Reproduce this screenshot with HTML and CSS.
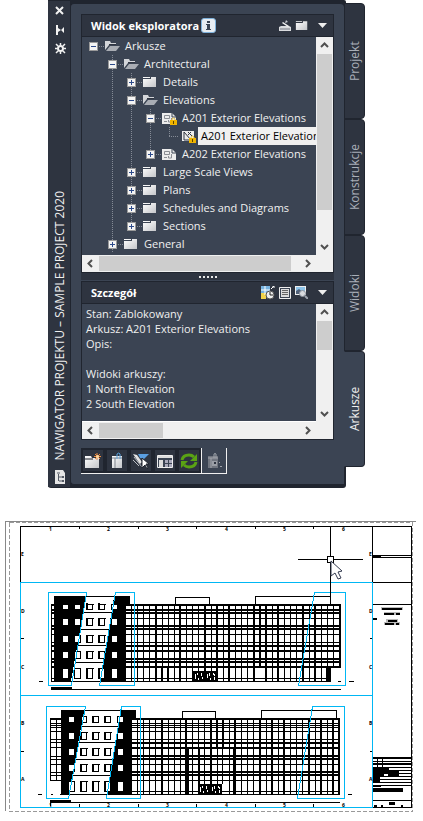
FILE: index.html
```html
<!DOCTYPE html>
<html lang="pl">
<head>
    <meta charset="UTF-8">
    <meta name="viewport" content="width=device-width, initial-scale=1.0">
    <title>Nawigator projektu</title>
    <link rel="stylesheet" href="styles.css">
</head>
<body>
    <!-- Shared icons -->
    <svg class="defs" aria-hidden="true">
        <defs>
            <linearGradient id="paper" x1="0" y1="0" x2="1" y2="1">
                <stop offset="0" stop-color="#fff"/>
                <stop offset="1" stop-color="#c4c6ca"/>
            </linearGradient>
            <symbol id="folder" viewBox="0 0 16 14">
                <path d="M1 2h7v1H1zM1 4h8V2h5v10H1z" fill="url(#paper)"/>
            </symbol>
            <symbol id="folder-open" viewBox="0 0 16 14">
                <path d="M1 11V2h5l1 2h5v2H5z" fill="#d4d6da"/>
                <path d="M2 12l4-5h10l-4 5z" fill="#a9adb4"/>
                <path d="M5 5h7v1H5z" fill="#2e3440"/>
            </symbol>
            <symbol id="sheet" viewBox="0 0 16 14">
                <path d="M1 2h10l4 4v7H1z" fill="#ececec"/>
                <path d="M11 2v4h4" fill="none" stroke="#3b4453"/>
                <path d="M3.500 4.500h5v3h-5zM10.500 7v4h-3v-2M3 10.500h3" fill="none" stroke="#8a8d93"/>
            </symbol>
            <symbol id="view" viewBox="0 0 16 14">
                <path d="M2 2h12v10H2z" fill="#ececec"/>
                <path d="M4 3l7 8H4zM8 3l4 4M11 3L8 6" fill="none" stroke="#2e3440"/>
            </symbol>
            <symbol id="lock" viewBox="0 0 7 8">
                <path d="M2 4V2q1.500-2 3 0v2" fill="none" stroke="#f3c63b"/>
                <path d="M0 3h7v5H0z" fill="#f0b400"/>
                <path d="M3 4h1v3H3z" fill="#5b4300"/>
            </symbol>
            <symbol id="chevron" viewBox="0 0 9 9">
                <path d="M1 6l3.500-3.500L8 6" fill="none" stroke="#505050" stroke-width="2"/>
            </symbol>
        </defs>
    </svg>

    <section class="navigator">
        <div class="window">
            <div class="rail">
                <button class="rail-btn" aria-label="Zamknij"><svg width="10" height="10" viewBox="0 0 10 10"><path d="M1 1l7 7M8 1l-7 7" stroke="#f2f2f2" stroke-width="2"/></svg></button>
                <button class="rail-btn" aria-label="Autoukrywanie"><svg width="10" height="10" viewBox="0 0 10 10"><path d="M1 0h2v10H1zM3 3l3 2-3 2zM9 2v6L6 5z" fill="#f2f2f2"/></svg></button>
                <button class="rail-btn" aria-label="Właściwości"><svg width="11" height="11" viewBox="0 0 11 11"><circle cx="5.500" cy="5.500" r="2.500" fill="none" stroke="#f2f2f2" stroke-width="2"/><path d="M5.500 0v2M5.500 9v2M0 5.500h2M9 5.500h2M1 1l2 2M8 8l2 2M10 1L8 3M3 8l-2 2" stroke="#f2f2f2" stroke-width="1.500"/></svg></button>
                <h1 class="rail-title">NAWIGATOR PROJEKTU – SAMPLE PROJECT 2020</h1>
                <svg class="rail-logo" width="12" height="14" viewBox="0 0 12 14"><path d="M1 0h8l2 3v11H1z" fill="#e6e6e6"/><path d="M3 3h3M4.500 4v7M5 7h3M5 11h4" stroke="#555b66" fill="none"/><path d="M8 6h2v2H8zM8 10h2v2H8z" fill="#555b66"/></svg>
            </div>

            <div class="body">
                <section class="pane">
                    <header class="pane-head">
                        <h2>Widok eksploratora</h2>
                        <span class="info"><svg width="13" height="13" viewBox="0 0 13 13"><path d="M5 2h3v2H5zM4 5h4v5h1v1H4v-1h1V6H4z" fill="#3b4453"/></svg></span>
                        <div class="tools">
                            <button aria-label="Skaner"><svg width="14" height="12" viewBox="0 0 14 12"><path d="M1 7l2-1h8l2 1v4H1z" fill="#d9dbde"/><path d="M5 2l6 4-1 1-6-4z" fill="#f4f4f4"/><path d="M2 9h10" stroke="#727781"/><path d="M8 0l2 2-3 1z" fill="#c5c8cd"/></svg></button>
                            <button aria-label="Folder"><svg width="14" height="13" viewBox="0 0 16 14"><use href="#folder"/></svg></button>
                            <button class="drop" aria-label="Menu"><svg width="9" height="5" viewBox="0 0 9 5"><path d="M0 0h9L4.500 5z" fill="#eee"/></svg></button>
                        </div>
                    </header>
                    <div class="scroll-area">
                        <ul class="tree">
                            <li>
                                <div class="row"><button class="toggle" aria-label="Zwiń"></button><svg class="icon"><use href="#folder-open"/></svg><span>Arkusze</span></div>
                                <ul class="open-end">
                                    <li>
                                        <div class="row"><button class="toggle" aria-label="Zwiń"></button><svg class="icon"><use href="#folder-open"/></svg><span>Architectural</span></div>
                                        <ul>
                                            <li><div class="row"><button class="toggle plus" aria-label="Rozwiń"></button><svg class="icon"><use href="#folder"/></svg><span>Details</span></div></li>
                                            <li>
                                                <div class="row"><button class="toggle" aria-label="Zwiń"></button><svg class="icon"><use href="#folder-open"/></svg><span>Elevations</span></div>
                                                <ul>
                                                    <li>
                                                        <div class="row"><button class="toggle" aria-label="Zwiń"></button><svg class="icon"><use href="#sheet"/><use href="#lock" x="9" y="6" width="7" height="8"/></svg><span>A201 Exterior Elevations</span></div>
                                                        <ul>
                                                            <li><div class="row leaf"><svg class="icon"><use href="#view"/><use href="#lock" x="9" y="6" width="7" height="8"/></svg><span class="selected">A201 Exterior Elevations</span></div></li>
                                                        </ul>
                                                    </li>
                                                    <li><div class="row"><button class="toggle plus" aria-label="Rozwiń"></button><svg class="icon"><use href="#sheet"/></svg><span>A202 Exterior Elevations</span></div></li>
                                                </ul>
                                            </li>
                                            <li><div class="row"><button class="toggle plus" aria-label="Rozwiń"></button><svg class="icon"><use href="#folder"/></svg><span>Large Scale Views</span></div></li>
                                            <li><div class="row"><button class="toggle plus" aria-label="Rozwiń"></button><svg class="icon"><use href="#folder"/></svg><span>Plans</span></div></li>
                                            <li><div class="row"><button class="toggle plus" aria-label="Rozwiń"></button><svg class="icon"><use href="#folder"/></svg><span>Schedules and Diagrams</span></div></li>
                                            <li><div class="row"><button class="toggle plus" aria-label="Rozwiń"></button><svg class="icon"><use href="#folder"/></svg><span>Sections</span></div></li>
                                        </ul>
                                    </li>
                                    <li><div class="row"><button class="toggle plus" aria-label="Rozwiń"></button><svg class="icon"><use href="#folder"/></svg><span>General</span></div></li>
                                </ul>
                            </li>
                        </ul>
                        <div class="vbar">
                            <button aria-label="W górę"><svg width="9" height="9"><use href="#chevron"/></svg></button>
                            <div class="track"><div class="thumb thumb-tree-y"></div></div>
                            <button class="down" aria-label="W dół"><svg width="9" height="9"><use href="#chevron"/></svg></button>
                        </div>
                    </div>
                    <div class="hbar">
                        <button class="left" aria-label="W lewo"><svg width="9" height="9"><use href="#chevron"/></svg></button>
                        <div class="track"><div class="thumb thumb-tree-x"></div></div>
                        <button class="right" aria-label="W prawo"><svg width="9" height="9"><use href="#chevron"/></svg></button>
                    </div>
                </section>

                <div class="splitter"><i></i><i></i><i></i><i></i><i></i></div>

                <section class="pane">
                    <header class="pane-head">
                        <h2>Szczegół</h2>
                        <div class="tools">
                            <button aria-label="Odśwież podgląd"><svg width="14" height="14" viewBox="0 0 14 14"><path d="M0 0h9v7H0z" fill="#77b3e0"/><path d="M0 7h5v6H0z" fill="#f2d24a"/><path d="M4 0v9M0 4h9" stroke="#fff"/><path d="M10 3l3-3M11 0h2v2" stroke="#fff" fill="none"/><circle cx="9" cy="9" r="4" fill="#eee" stroke="#555"/><path d="M9 6v3h3" fill="none" stroke="#222"/></svg></button>
                            <button aria-label="Szczegóły"><svg width="12" height="12" viewBox="0 0 12 12"><path d="M.500.500h11v11H.500z" fill="#3b4453" stroke="#eee"/><path d="M2 2h8v8H2z" fill="#ddd"/><path d="M3 3.500h6M3 5.500h6M3 7.500h6" stroke="#666"/></svg></button>
                            <button aria-label="Podgląd"><svg width="13" height="13" viewBox="0 0 13 13"><path d="M0 0h11v9H0z" fill="#eee"/><path d="M1 1h9v4H1z" fill="#8ec4ea"/><path d="M1 8V5l3-2 6 5z" fill="#506078"/><circle cx="7.500" cy="7.500" r="3" fill="#d8dade" stroke="#8d939d"/><path d="M10 10l3 3" stroke="#9aa0aa" stroke-width="2"/></svg></button>
                            <button class="drop" aria-label="Menu"><svg width="9" height="5" viewBox="0 0 9 5"><path d="M0 0h9L4.500 5z" fill="#eee"/></svg></button>
                        </div>
                    </header>
                    <div class="scroll-area">
                        <div class="details">
                            <p>Stan: Zablokowany<br>Arkusz: A201 Exterior Elevations<br>Opis:</p>
                            <p>Widoki arkuszy:<br>1 North Elevation<br>2 South Elevation</p>
                        </div>
                        <div class="vbar">
                            <button aria-label="W górę"><svg width="9" height="9"><use href="#chevron"/></svg></button>
                            <div class="track"><div class="thumb thumb-det-y"></div></div>
                            <button class="down" aria-label="W dół"><svg width="9" height="9"><use href="#chevron"/></svg></button>
                        </div>
                    </div>
                    <div class="hbar">
                        <button class="left" aria-label="W lewo"><svg width="9" height="9"><use href="#chevron"/></svg></button>
                        <div class="track"><div class="thumb thumb-det-x"></div></div>
                        <button class="right" aria-label="W prawo"><svg width="9" height="9"><use href="#chevron"/></svg></button>
                    </div>
                </section>

                <div class="toolbar">
                    <button aria-label="Nowy podzbiór"><svg width="18" height="18" viewBox="0 0 18 18"><path d="M1 4h6l1 2h7v10H1z" fill="url(#paper)"/><path d="M1 7h8" stroke="#20252f"/><path d="M13 1v7M10 4.500h7M11 2l5 5M16 2l-5 5" stroke="#f08a3c"/><circle cx="13.500" cy="4.500" r="1.500" fill="#ffd9a0"/></svg></button>
                    <button aria-label="Nowy arkusz"><svg width="18" height="18" viewBox="0 0 18 18"><path d="M4 4h10v12H4z" fill="url(#paper)"/><path d="M4 6h10M7 6v10" stroke="#7d828b"/><path d="M9 7V2q2-2 3 0v5" fill="none" stroke="#5aa2dd"/></svg></button>
                    <button aria-label="Etykieta"><svg width="18" height="18" viewBox="0 0 18 18"><path d="M1 2l4 1 5 7-2 2z" fill="#e4e4e4"/><path d="M2 5l8 10M1 8l6 6" stroke="#b9bcc2"/><path d="M6 2h11l-5 5-4-1z" fill="#5a9ee0"/><path d="M10 6v10l3-3 2 4 1-1-2-4h3z" fill="#fff" stroke="#20252f"/></svg></button>
                    <button aria-label="Tabela arkuszy"><svg width="18" height="18" viewBox="0 0 18 18"><path d="M1.500 3.500h15v12h-15z" fill="#3b4453" stroke="#eee"/><path d="M2 4h14v2H2zM3 8h4v7H3z" fill="#ddd"/><path d="M9 8h3v3H9zM13 8h3v3h-3zM9 12h3v3H9zM13 12h3v3h-3z" fill="#aab"/></svg></button>
                    <button aria-label="Odśwież"><svg width="18" height="18" viewBox="0 0 18 18"><path d="M2 8q1-5 7-5 3 0 5 2M16 10q-1 5-7 5-3 0-5-2" fill="none" stroke="#5aa314" stroke-width="3"/><path d="M17 2v7h-7zM1 16V9h7z" fill="#5aa314"/></svg></button>
                    <button class="framed" aria-label="Eksport" disabled><svg width="18" height="18" viewBox="0 0 18 18"><path d="M3 4h10v12H3z" fill="#70757f"/><path d="M3 6h10M6 6v10M9 6V2q1-1 2 0v4" fill="none" stroke="#a0a4ab"/><path d="M7 9h5v5H7z" fill="#9a9ea6"/><path d="M9 10h2v2H9z" fill="#2e3440"/><path d="M14 10h1v1h-1zM15 14h2v1h-2z" fill="#a0a4ab"/></svg></button>
                </div>
            </div>
        </div>

        <nav class="tabs">
            <button class="tab">Projekt</button>
            <button class="tab">Konstrukcje</button>
            <button class="tab">Widoki</button>
            <button class="tab active">Arkusze</button>
        </nav>
    </section>

    <!-- Sheet A201: north and south elevation -->
    <svg class="drawing" viewBox="0 516 423 305" role="img" aria-label="Exterior Elevations">
        <g fill="none" shape-rendering="crispEdges">
            <path d="M416 521.500H5.500V811" stroke="#888"/>
            <path d="M9.500 522.500H412.500V811.500H9.500z" stroke="#999" stroke-dasharray="4 2"/>

            <!-- sheet border and title block -->
            <g stroke="#000">
                <path d="M20.500 582V526.500H411.500V807.500H372M372.500 526V582M372 582.500h39M372 604.500h39M372 555.500h39M372 557.500h39"/>
                <path d="M79.500 526v3M138.500 526v3M196.500 526v3M255.500 526v3M313.500 526v3M21 638.500h3M21 751.500h3M370 638.500h2M370 751.500h2"/>
                <path d="M79.500 804v3M138.500 804v3M196.500 804v3M255.500 804v3M313.500 804v3"/>
                <path d="M373 556.500h8M373 619h4" stroke-width="2"/>
                <path d="M373 758h38M373 764h38" stroke-width="2"/>
                <path d="M373 761.500h38M373 767h38M373 770h38M373 773.500h38M373 776.500h38M373 779.500h38M373 782.500h38M373 785.500h38M373 800.500h38M377.500 757v10M382.500 757v10"/>
                <path d="M373 768h16M373 772h26" stroke-width="3"/>
                <path d="M373 775h11M388 774h11" stroke-width="3"/>
            </g>
            <g fill="#000">
                <path d="M373 767h7v15h-7zM373 788h30v4h-30zM389 802h6v3h-6zM373 785h8v2h-8zM374 805h3v2h-3zM381 805h2v2h-2zM401 805h2v2h-2z"/>
            </g>
            <path d="M381 608.500h22M384 613.500h16M386 620.500h12M384 623.500h16" stroke="#bbb" stroke-width="3"/>
            <path d="M382 608.500h20M384 613.500h10M396 613.500h4M388 620.500h9M385 623.500h9M396 623.500h3" stroke="#000" stroke-width="2"/>

            <!-- north: facade grid -->
            <g stroke="#000">
                <path d="M51.500 604v77M131.500 604v77M137.500 604v77M143.500 604v77M149.500 604v77M162.500 604v77M168.500 604v77M174.500 604v77M186.500 604v77M192.500 604v77M198.500 604v67M211.500 604v67M223.500 604v77M235.500 604v77M241.500 604v77M247.500 604v77M272.500 604v77M284.500 604v77M290.500 604v77M296.500 604v77M309.500 604v77M321.500 604v77M327.500 604v77M333.500 604v63"/>
                <path d="M156 604v77M180 604v77M205 604v77M217 604v77M229 604v77M254 604v77M260 604v63M266 604v77M278 604v77M303 604v77M315 604v77M340 604v63M162 667v14M168 667v14" stroke-width="2"/>
                <path d="M51 605h290M51 610h290M51 613h290M51 626h290M51 629h290M51 646h290M51 651h290M51 659h290M51 662h290M51 667h290" stroke-width="2"/>
                <path d="M51 618.500h290M51 634.500h290M51 642.500h290M51 678.500h280M51 681.500h280M51 689.500h290M175.500 604v-6.500h34v6.500M255.500 604v-7.500h75v7.500M39 681.500h4M338 681.500h3M349 681.500h5"/>
                <path d="M51 688h21" stroke-width="3"/>
            </g>
            <path d="M326 667h5v14h-5zM54 596h76v8h-4v78H54z" fill="#000"/>
            <path d="M86 597h28l-14 84H71z" fill="#fff"/>
            <path d="M84 596.500h30M83 612.500h29M81 629.500h28M78 645.500h28M75 662.500h29M71 681.500h29" stroke="#000"/>
            <g fill="#fff" stroke="#000">
                <path d="M62.500 604.500h6v5h-6zM74.500 604.500h6v5h-6zM87.500 604.500h5v5h-5zM99.500 604.500h5v5h-5zM111.500 604.500h6v5h-6z"/>
                <path d="M62.500 618.500h6v7h-6zM74.500 618.500h6v7h-6zM87.500 618.500h5v7h-5zM99.500 618.500h5v7h-5zM111.500 618.500h6v7h-6z"/>
                <path d="M62.500 635.500h6v7h-6zM74.500 635.500h6v7h-6zM87.500 635.500h5v7h-5zM99.500 635.500h5v7h-5zM111.500 635.500h6v7h-6z"/>
                <path d="M62.500 651.500h6v7h-6zM74.500 651.500h6v7h-6zM87.500 651.500h5v7h-5zM99.500 651.500h5v7h-5zM111.500 651.500h6v7h-6z"/>
                <path d="M62.500 668.500h6v10h-6zM74.500 668.500h6v10h-6zM87.500 668.500h5v10h-5zM99.500 668.500h5v10h-5zM111.500 668.500h6v10h-6z"/>
            </g>
            <path d="M86 604h8M98 604h8M86 618h8M98 618h8M86 635h8M98 635h8M75 651h6M86 651h8M98 651h8M74 668h7M86 668h8M98 668h8" stroke="#000"/>
            <path d="M87 603v7M99 603v7M87 618v8M99 618v8M87 635v8M99 635v8M87 651v8M99 651v8M87 668v11M99 668v11" stroke="#000" stroke-width="2"/>
            <path d="M193 671h24v10h-24z" fill="#000"/>
            <path d="M195 674v5M198 673l-1 2M198 678v2M201 673v3M202 677v2M207 674v4M210 673l-1 3M210 678v2M213 673l2 3M214 677v3" stroke="#fff"/>

            <!-- south: facade grid -->
            <g stroke="#000">
                <path d="M50.500 718v62M56.500 718v62M137.500 718v76M143.500 718v76M149.500 718v76M155.500 718v76M168.500 718v76M174.500 718v76M180.500 718v76M192.500 718v76M204.500 718v66M229.500 718v76M241.500 718v76M247.500 718v76M253.500 718v76M266.500 718v76M278.500 718v76M290.500 718v76M296.500 718v76M302.500 718v76M315.500 718v76M327.500 718v76M217.500 748v36M222.500 748v36"/>
                <path d="M162 718v76M186 718v76M199 748v36M211 718v66M217 718v30M223 718v30M235 718v76M260 718v76M272 718v76M284 718v76M309 718v76M321 718v76M333 718v76M339 718v76" stroke-width="2"/>
                <path d="M198.500 718v30"/>
                <path d="M187.500 748v46M234.500 748v46" stroke-width="3"/>
                <path d="M50 719h290M132 743h208M132 748h208M132 756h208M132 759h208M132 772h208M132 775h208" stroke-width="2"/>
                <path d="M50 723.500h290M50 725.500h290M50 727.500h290M50 731.500h290M50 739.500h290M50 742.500h20M50 747.500h20M50 756.500h20M50 759.500h20M50 764.500h290M50 772.500h20M50 775.500h20M50 780.500h290M132 791.500h208M60 794.500h280M50 802.500h290M182.500 718v-6.500h33v6.500M261.500 718v-7.500h75v7.500M38 794.500h4M51 794.500h2M348 794.500h4M50.500 800v6"/>
                <path d="M51 801h20" stroke-width="2"/>
            </g>
            <path d="M61 710h75v8h-4v76H61z" fill="#000"/>
            <path d="M84 711h37l-14 83H69z" fill="#fff"/>
            <path d="M84 710.500h37M82 726.500h37M79 742.500h37M76 759.500h37M73 775.500h37M69 794.500h38" stroke="#000"/>
            <g fill="#fff" stroke="#000">
                <path d="M68.500 716.500h6v6h-6zM81.500 716.500h5v6h-5zM93.500 716.500h5v6h-5zM105.500 716.500h5v6h-5zM117.500 716.500h6v6h-6z"/>
                <path d="M68.500 732.500h6v7h-6zM81.500 732.500h5v7h-5zM93.500 732.500h5v7h-5zM105.500 732.500h5v7h-5zM117.500 732.500h6v7h-6z"/>
                <path d="M68.500 748.500h6v7h-6zM81.500 748.500h5v7h-5zM93.500 748.500h5v7h-5zM105.500 748.500h5v7h-5zM117.500 748.500h6v7h-6z"/>
                <path d="M68.500 764.500h6v7h-6zM81.500 764.500h5v7h-5zM93.500 764.500h5v7h-5zM105.500 764.500h5v7h-5zM117.500 764.500h6v7h-6z"/>
                <path d="M68.500 781.500h6v10h-6zM81.500 781.500h5v10h-5zM93.500 781.500h5v10h-5zM105.500 781.500h5v10h-5zM117.500 781.500h6v10h-6z"/>
            </g>
            <path d="M80 732h8M92 732h8M104 732h8M80 748h8M92 748h8M104 748h8M80 764h8M92 764h8M104 764h8M80 781h8M92 781h8M104 781h8" stroke="#000"/>
            <path d="M81 716v7M93 716v7M105 716v7M81 732v8M93 732v8M105 732v8M81 748v8M93 748v8M105 748v8M81 764v8M93 764v8M105 764v8M81 781v11M93 781v11M105 781v11" stroke="#000" stroke-width="2"/>
            <path d="M198 784h24v10h-24z" fill="#000"/>
            <path d="M200 787v5M203 786l-1 2M203 791v2M206 786v3M207 790v2M212 787v4M215 786l-1 3M215 791v2M218 786l2 3M219 790v3" stroke="#fff"/>

            <!-- viewports -->
            <g stroke="#00b7f4">
                <path d="M20.500 582.500H372.500V807.500H20.500zM20 695.500h352"/>
                <path d="M48.500 592.500H86.500L71.500 685.500H48.500zM115.500 592.500H134.500V685.500H99.500zM314.500 592.500H345.500V685.500H298.500z"/>
                <path d="M46.500 706.500H85.500L68.500 798.500H46.500zM121.500 706.500H140.500V798.500H106.500zM312.500 706.500H344.500V798.500H297.500z"/>
            </g>

            <!-- crosshair -->
            <path d="M298 559.500h65M330.500 526v71" stroke="#000"/>
            <path d="M327.500 556.500h6v6h-6z" fill="#fff" stroke="#000"/>
        </g>
        <path d="M331 561v15l4-3 3 6 3-1-3-6 4-1z" fill="#fff" stroke="#333a50"/>
        <g class="marks">
            <text x="49" y="531">1</text><text x="107" y="531">2</text><text x="166" y="531">3</text><text x="225" y="531">4</text><text x="283" y="531">5</text><text x="342" y="531">6</text>
            <text x="49" y="807">1</text><text x="107" y="807">2</text><text x="166" y="807">3</text><text x="225" y="807">4</text><text x="283" y="807">5</text><text x="342" y="807">6</text>
            <text x="21" y="556">E</text><text x="21" y="613">D</text><text x="21" y="669">C</text><text x="21" y="725">B</text><text x="21" y="781">A</text>
            <text x="369" y="556">E</text><text x="369" y="613">D</text><text x="369" y="669">C</text><text x="369" y="725">B</text><text x="369" y="781">A</text>
        </g>
    </svg>
</body>
</html>
```
FILE: styles.css
```css
* {
    box-sizing: border-box;
}

body {
    margin: 0;
    background-color: #fff;
    color: #f0f0f0;
    font-family: "Open Sans", "Noto Sans", sans-serif;
    font-size: 11px;
    line-height: 18px;
}

button {
    display: flex;
    align-items: center;
    justify-content: center;
    padding: 0;
    border: 0;
    background: none;
    color: inherit;
    font: inherit;
    cursor: pointer;
}

svg {
    display: block;
    flex: none;
}

.defs {
    position: absolute;
    width: 0;
    height: 0;
}

/* Palette window */
.navigator {
    display: flex;
    align-items: flex-start;
    margin: 0 58px 0 48px;
}

.window {
    display: flex;
    flex: 1;
    min-width: 0;
    padding: 3px 2px 3px 0;
    background-color: #20252f;
    border-radius: 0 2px 3px 3px;
}

.rail {
    display: flex;
    flex-direction: column;
    align-items: center;
    width: 22px;
    margin: -2px 0;
    padding-left: 2px;
    background-color: #2e3440;
}

.rail-btn {
    width: 18px;
    height: 19px;
}

.rail-title {
    margin: auto 0 10px;
    font-size: 12px;
    font-weight: normal;
    line-height: 18px;
    white-space: nowrap;
    writing-mode: vertical-rl;
    transform: rotate(180deg);
}

.rail-logo {
    margin-bottom: 3px;
}

.body {
    flex: 1;
    min-width: 0;
    padding: 10px;
    background-color: #3b4453;
    border: 1px solid #20252f;
    border-right: 0;
    border-radius: 4px 4px 0 4px;
}

.pane {
    border: 1px solid #20252f;
}

.pane-head {
    display: flex;
    align-items: center;
    height: 22px;
    padding: 0 3px 0 9px;
    background-color: #2e3440;
    border-bottom: 1px solid #20252f;
}

.pane-head h2 {
    margin: 0;
    font-size: 11px;
    font-weight: bold;
    color: #fff;
}

.info {
    margin-left: 2px;
    background-color: #e8edf2;
    border: 1px solid #7fb2dc;
    border-radius: 3px;
}

.tools {
    display: flex;
    gap: 2px;
    margin-left: auto;
}

.tools button {
    width: 15px;
    height: 16px;
}

.tools .drop {
    margin-left: 4px;
}

/* Scroll bars */
.scroll-area {
    display: flex;
}

.vbar,
.hbar {
    display: flex;
    background-color: #f0f0f0;
}

.vbar {
    flex-direction: column;
    width: 17px;
}

.vbar button,
.hbar button {
    width: 17px;
    height: 17px;
}

.hbar {
    padding-right: 17px;
}

.track {
    flex: 1;
}

.thumb {
    background-color: #cdcdcd;
}

.vbar .thumb {
    margin: 0 1px;
}

.hbar .thumb {
    height: 15px;
    margin-top: 1px;
}

.thumb-tree-y {
    height: 85%;
}

.thumb-tree-x {
    width: 96%;
}

.thumb-det-y {
    height: 35%;
}

.thumb-det-x {
    width: 32%;
}

.down svg {
    transform: rotate(180deg);
}

.left svg {
    transform: rotate(-90deg);
}

.right svg {
    transform: rotate(90deg);
}

/* Tree */
.tree {
    flex: 1;
    min-width: 0;
    margin: 0;
    padding: 0 0 2px 7px;
    overflow: hidden;
}

.tree,
.tree ul {
    list-style: none;
}

.tree ul {
    margin: 0 0 0 23px;
    padding: 0;
    background: repeating-linear-gradient(#858b96 0 1px, transparent 1px 2px) no-repeat;
    background-size: 1px calc(100% - 9px);
}

.tree .open-end {
    background-size: 1px 100%;
}

.tree ul > li {
    margin-left: -4px;
}

.row {
    display: flex;
    align-items: center;
    height: 18px;
    white-space: nowrap;
}

.row .icon {
    width: 16px;
    height: 14px;
    margin-right: 5px;
}

.toggle {
    flex: none;
    width: 9px;
    height: 9px;
    margin-right: 6px;
    background: linear-gradient(#2c4a8a, #2c4a8a) center / 5px 1px no-repeat #f4f4f4;
    border: 1px solid #9a9a9a;
}

.toggle.plus {
    background:
        linear-gradient(#2c4a8a, #2c4a8a) center / 5px 1px no-repeat,
        linear-gradient(#2c4a8a, #2c4a8a) center / 1px 5px no-repeat #f4f4f4;
}

.row:not(.leaf) {
    background: repeating-linear-gradient(90deg, #858b96 0 1px, transparent 1px 2px) 10px 9px / 5px 1px no-repeat;
}

.leaf {
    padding-left: 15px;
    background: repeating-linear-gradient(90deg, #858b96 0 1px, transparent 1px 2px) 4px 9px / 10px 1px no-repeat;
}

.selected {
    flex: 1;
    height: 18px;
    margin-left: -3px;
    padding-left: 3px;
    background-color: #f0f0f0;
    color: #000;
}

.splitter {
    display: flex;
    align-items: center;
    justify-content: center;
    gap: 2px;
    height: 7px;
    margin-bottom: 1px;
    background-color: #2e3440;
}

.splitter i {
    width: 2px;
    height: 2px;
    background-color: #e6e6e6;
}

/* Details */
.details {
    flex: 1;
    min-width: 0;
    padding: 2px 4px 10px;
    line-height: 15px;
    white-space: nowrap;
    overflow: hidden;
    border-bottom: 1px solid #fff;
}

.details p {
    margin: 0 0 15px;
}

.details p:last-child {
    margin-bottom: 0;
}

.toolbar {
    display: flex;
    width: max-content;
    margin-top: 8px;
    border-bottom: 1px solid #f0f0f0;
}

.toolbar button {
    width: 24px;
    height: 25px;
    background-color: #2e3440;
    border: 2px solid #20252f;
}

.toolbar .framed {
    width: 26px;
    border: 1px solid #f0f0f0;
    border-width: 0 1px;
    background-color: #3b4453;
}

/* Side tabs */
.tabs {
    width: 21px;
    margin: 3px 0 0 -2px;
}

.tab {
    width: 21px;
    height: 116px;
    background-color: #2e3440;
    border: 1px solid #20252f;
    border-radius: 4px 0 0 4px;
    color: #a9aeb8;
    font-size: 12px;
    writing-mode: vertical-rl;
    transform: rotate(180deg);
}

.tab.active {
    background-color: #3b4453;
    border-right-color: #3b4453;
    color: #f0f0f0;
}

/* Drawing sheet */
.drawing {
    width: 100%;
    height: auto;
    margin-top: 28px;
}

.marks {
    font-size: 5px;
    font-weight: bold;
    fill: #000;
}
```
